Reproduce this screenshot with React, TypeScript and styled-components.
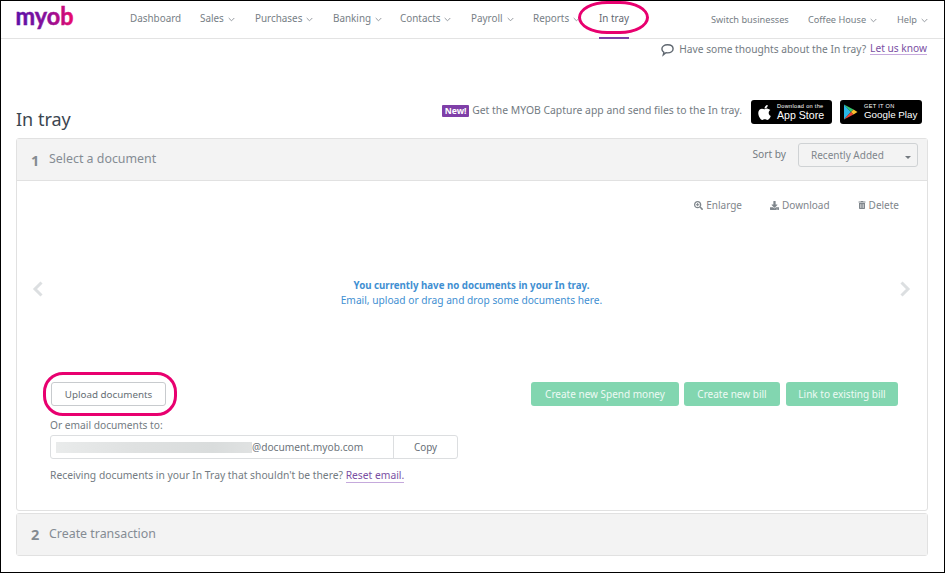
import React from "react";
import styled, { createGlobalStyle } from "styled-components";
import { FaApple, FaTrashAlt, FaSearchPlus, FaDownload } from "react-icons/fa";

const Global = createGlobalStyle`
  html, body { margin: 0; padding: 0; background: #fff; }
  * { box-sizing: border-box; }
  body { font-family: "Noto Sans", "Open Sans", sans-serif; font-size: 10.2px; color: #737b82; }
`;

const Frame = styled.div`
  position: relative;
  width: 945px;
  height: 573px;
  border: 1px solid #000;
  overflow: hidden;
  background: #fff;
`;

const Nav = styled.nav`
  height: 38px;
  border-bottom: 1px solid #e3e3e3;
  display: flex;
  align-items: center;
  padding-left: 14px;
  font-size: 9.9px;
`;

const Logo = styled.svg`
  width: 60px;
  height: 36px;
  flex: none;
`;

const NavMain = styled.div`
  display: flex;
  align-items: center;
  margin-left: 55px;
  height: 37px;
`;

const NavItem = styled.span<{ $w: number; $active?: boolean }>`
  position: relative;
  display: flex;
  align-items: center;
  gap: 4px;
  width: ${(p) => p.$w}px;
  height: 100%;
  padding-bottom: 3px;
  white-space: nowrap;
  color: ${(p) => (p.$active ? "#5f6770" : "#767e85")};
  &::after {
    content: "";
    display: ${(p) => (p.$active ? "block" : "none")};
    position: absolute;
    left: 0;
    width: 30px;
    bottom: -1px;
    height: 2px;
    background: #7d3fa8;
  }
`;

const NavRight = styled.div`
  margin-left: auto;
  display: flex;
  align-items: center;
  height: 37px;
  padding-top: 2px;
  font-size: 9.2px;
  padding-right: 16px;
`;

const Chevron = () => (
  <svg width="7" height="5" viewBox="0 0 7 5" fill="none" stroke="#8a9096" strokeWidth="0.9" style={{ flex: "none", marginTop: 2 }}>
    <path d="M0.7 1 L3.5 3.8 L6.3 1" />
  </svg>
);

const Feedback = styled.div`
  height: 19px;
  display: flex;
  align-items: center;
  justify-content: flex-end;
  padding-right: 17px;
`;

const FeedbackIcon = styled.svg`
  margin-right: 5px;
  margin-top: 2px;
`;

const Link = styled.a`
  color: #7a4fa3;
  border-bottom: 1px solid #c5a9dc;
  line-height: 12px;
`;

const FeedbackLink = styled(Link)`
  margin-left: 4px;
`;

const TitleRow = styled.div`
  height: 80px;
  display: flex;
  align-items: flex-end;
  justify-content: space-between;
  padding: 0 22px 6px 15px;
`;

const Title = styled.h1`
  margin: 0;
  font-weight: 400;
  font-size: 18px;
  line-height: 26px;
  color: #3c4650;
`;

const Promo = styled.div`
  display: flex;
  align-items: center;
  margin-bottom: 8px;
  font-size: 10.4px;
`;

const PromoText = styled.span`
  margin-top: -4px;
`;

const NewBadge = styled.span`
  background: #7f3fa8;
  color: #fff;
  font-weight: 700;
  font-size: 8.6px;
  line-height: 12px;
  height: 12px;
  width: 27px;
  text-align: center;
  border-radius: 1px;
  margin-right: 3px;
  margin-top: -2px;
`;

const StoreBadge = styled.div<{ $w: number; $ml: number; $gap: number }>`
  width: ${(p) => p.$w}px;
  height: 24px;
  margin-left: ${(p) => p.$ml}px;
  background: #000;
  border-radius: 3px;
  color: #fff;
  display: flex;
  align-items: center;
  padding-left: ${(p) => (p.$gap > 5 ? 3 : 5)}px;
  gap: ${(p) => p.$gap}px;
`;

const StoreText = styled.div`
  display: flex;
  flex-direction: column;
  font-family: "Liberation Sans", sans-serif;
`;

const StoreSmall = styled.span`
  font-size: 5.6px;
  line-height: 6px;
  letter-spacing: 0.3px;
`;

const StoreBig = styled.span<{ $size: number }>`
  font-size: ${(p) => p.$size}px;
  line-height: 12px;
  white-space: nowrap;
`;

const Panel = styled.section`
  margin: 0 16px 0 15px;
  border: 1px solid #e1e1e1;
  border-radius: 3px;
`;

const StepHead = styled.header<{ $h: number; $border?: boolean }>`
  height: ${(p) => p.$h}px;
  background: #f3f3f3;
  display: flex;
  align-items: center;
  padding: 0 0 ${(p) => (p.$border ? 2 : 3)}px 14px;
  border-bottom: ${(p) => (p.$border ? "1px solid #e1e1e1" : "none")};
`;

const StepNum = styled.span`
  font-weight: 700;
  font-size: 14.5px;
  color: #848b91;
  width: 18px;
  margin-top: 2px;
`;

const StepTitle = styled.span`
  font-size: 12.4px;
  color: #858c93;
`;

const SortBy = styled.div`
  margin-left: auto;
  display: flex;
  align-items: center;
  padding-right: 9px;
  gap: 12px;
  margin-top: -7px;
`;

const SortLabel = styled.span`
  margin-top: -2px;
`;

const Select = styled.div`
  width: 120px;
  height: 24px;
  border: 1px solid #cfd2d4;
  border-radius: 3px;
  display: flex;
  align-items: center;
  padding-left: 12px;
  position: relative;
  color: #7f868c;
  font-size: 10px;
  &::after {
    content: "";
    position: absolute;
    right: 6px;
    top: 12px;
    border: 3px solid transparent;
    border-top: 3px solid #73797f;
  }
`;

const StepBody = styled.div`
  height: 329px;
  display: flex;
  flex-direction: column;
  padding: 0 29px 0 33px;
`;

const Tools = styled.div`
  height: 48px;
  display: flex;
  justify-content: flex-end;
  align-items: center;
  gap: 28px;
  font-size: 10px;
  margin-right: -1px;
`;

const Tool = styled.span`
  display: inline-flex;
  align-items: center;
  gap: 3px;
  color: #7f868c;
`;

const Viewer = styled.div`
  height: 153px;
  position: relative;
  display: flex;
  flex-direction: column;
  align-items: center;
  justify-content: center;
  color: #3f8fd2;
  line-height: 15px;
  padding: 0 5px 25px 0;
`;

const Arrow = styled.svg<{ $right?: boolean }>`
  position: absolute;
  top: 52px;
  ${(p) => (p.$right ? "right: -13px;" : "left: -18px;")}
`;

const Strong = styled.strong`
  font-weight: 700;
  font-size: 9.7px;
`;

const Actions = styled.div`
  display: flex;
  align-items: center;
  height: 24px;
`;

const GhostButton = styled.button`
  width: 115px;
  height: 24px;
  margin-left: 1px;
  font: inherit;
  font-size: 9.8px;
  color: #666e75;
  background: #fff;
  border: 1px solid #c8cbce;
  border-radius: 3px;
  padding: 0;
`;

const Greens = styled.div`
  margin-left: auto;
  display: flex;
`;

const GreenButton = styled.button<{ $w: number; $ml: number }>`
  width: ${(p) => p.$w}px;
  margin-left: ${(p) => p.$ml}px;
  height: 24px;
  font: inherit;
  font-size: 10px;
  color: #eefaf4;
  background: #82d6b0;
  border: none;
  border-radius: 3px;
  padding: 0;
`;

const EmailLabel = styled.div`
  margin-top: 12px;
  line-height: 15px;
  color: #737b82;
`;

const EmailRow = styled.div`
  margin-top: 2px;
  width: 408px;
  height: 24px;
  display: flex;
  border: 1px solid #dcdee0;
  border-radius: 3px;
`;

const EmailValue = styled.div`
  width: 343px;
  border-right: 1px solid #dcdee0;
  display: flex;
  align-items: center;
  padding-left: 5px;
  color: #6d747b;
`;

const Blurred = styled.span`
  width: 196px;
  height: 11px;
  background: linear-gradient(90deg, #e9ebeb, #dfe1e1 40%, #d9dcdc 80%, #e0e2e2);
  filter: blur(0.6px);
`;

const CopyCell = styled.div`
  flex: 1;
  display: flex;
  align-items: center;
  justify-content: center;
  color: #666e75;
  font-size: 9.9px;
`;

const Reset = styled.div`
  margin-top: 9px;
  line-height: 15px;
  font-size: 10.3px;
`;

const SecondPanel = styled(Panel)`
  margin-top: 2px;
`;

const Ring = styled.div<{ $l: number; $t: number; $w: number; $h: number }>`
  position: absolute;
  left: ${(p) => p.$l}px;
  top: ${(p) => p.$t}px;
  width: ${(p) => p.$w}px;
  height: ${(p) => p.$h}px;
  border: 3px solid #e8006f;
  border-radius: 30px / 17px;
  pointer-events: none;
`;

const RingBox = styled(Ring)`
  border-radius: 20px;
`;

const nav: [string, number, boolean][] = [
  ["Dashboard", 70, false],
  ["Sales", 55, true],
  ["Purchases", 78, true],
  ["Banking", 67, true],
  ["Contacts", 71, true],
  ["Payroll", 62, true],
  ["Reports", 66, true],
];

export default function App() {
  return (
    <Frame>
      <Global />
      <Nav>
        <Logo viewBox="0 0 60 36">
          <defs>
            <linearGradient id="lg" x1="0" x2="1" y1="0" y2="0">
              <stop offset="0" stopColor="#5a0fa8" />
              <stop offset="0.55" stopColor="#8a0f9a" />
              <stop offset="1" stopColor="#ea0a6c" />
            </linearGradient>
          </defs>
          <text x="0.5" y="23" fill="url(#lg)" stroke="url(#lg)" strokeWidth="0.5" fontFamily="Lato, sans-serif" fontWeight="700" fontSize="24" textLength="58" lengthAdjust="spacingAndGlyphs">myob</text>
        </Logo>
        <NavMain>
          {nav.map(([t, w, c]) => (
            <NavItem key={t} $w={w}>
              {t}
              {c && <Chevron />}
            </NavItem>
          ))}
          <NavItem $w={40} $active>In tray</NavItem>
        </NavMain>
        <NavRight>
          <NavItem $w={97}>Switch businesses</NavItem>
          <NavItem $w={89}>Coffee House <Chevron /></NavItem>
          <NavItem $w={31}>Help <Chevron /></NavItem>
        </NavRight>
      </Nav>
      <Feedback>
        <FeedbackIcon width="13" height="14" viewBox="0 0 13 14" fill="none" stroke="#5f6770" strokeWidth="1.4">
          <path d="M2.3 11.8 L2.9 9.4 C1.6 8.5 0.9 7.3 0.9 6 C0.9 3.6 3.2 1.7 6.5 1.7 C9.8 1.7 12.1 3.4 12.1 5.8 C12.1 8.2 9.8 9.9 6.6 9.9 C5.9 9.9 5.4 9.9 4.9 9.7 Z" />
        </FeedbackIcon>
        <span>Have some thoughts about the In tray?</span>
        <FeedbackLink>Let us know</FeedbackLink>
      </Feedback>
      <TitleRow>
        <Title>In tray</Title>
        <Promo>
          <NewBadge>New!</NewBadge>
          <PromoText>Get the MYOB Capture app and send files to the In tray.</PromoText>
          <StoreBadge $w={81} $ml={9} $gap={4}>
            <FaApple size={17} />
            <StoreText>
              <StoreSmall>Download on the</StoreSmall>
              <StoreBig $size={10.6}>App Store</StoreBig>
            </StoreText>
          </StoreBadge>
          <StoreBadge $w={82} $ml={8} $gap={6}>
            <svg width="15" height="16" viewBox="0 0 15 16">
              <path d="M1 0.5 L8 8 L1 15.5 Z" fill="#29b6e8" />
              <path d="M1 0.5 L10.5 5.6 L8 8 Z" fill="#35c46f" />
              <path d="M1 15.5 L10.5 10.4 L8 8 Z" fill="#ea4335" />
              <path d="M10.5 5.6 L14.5 8 L10.5 10.4 L8 8 Z" fill="#fbc02d" />
            </svg>
            <StoreText>
              <StoreSmall>GET IT ON</StoreSmall>
              <StoreBig $size={9.8}>Google Play</StoreBig>
            </StoreText>
          </StoreBadge>
        </Promo>
      </TitleRow>
      <Panel>
        <StepHead $h={42} $border>
          <StepNum>1</StepNum>
          <StepTitle>Select a document</StepTitle>
          <SortBy>
            <SortLabel>Sort by</SortLabel>
            <Select>Recently Added</Select>
          </SortBy>
        </StepHead>
        <StepBody>
          <Tools>
            <Tool><FaSearchPlus size={9} /> Enlarge</Tool>
            <Tool><FaDownload size={9} /> Download</Tool>
            <Tool><FaTrashAlt size={8} /> Delete</Tool>
          </Tools>
          <Viewer>
            <Arrow width="12" height="16" viewBox="0 0 12 16" fill="none" stroke="#dcdfe1" strokeWidth="3">
              <path d="M9.5 1.5 L3 8 L9.5 14.5" />
            </Arrow>
            <Strong>You currently have no documents in your In tray.</Strong>
            <span>Email, upload or drag and drop some documents here.</span>
            <Arrow $right width="12" height="16" viewBox="0 0 12 16" fill="none" stroke="#dcdfe1" strokeWidth="3">
              <path d="M2.5 1.5 L9 8 L2.5 14.5" />
            </Arrow>
          </Viewer>
          <Actions>
            <GhostButton>Upload documents</GhostButton>
            <Greens>
              <GreenButton $w={148} $ml={0}>Create new Spend money</GreenButton>
              <GreenButton $w={96} $ml={5}>Create new bill</GreenButton>
              <GreenButton $w={112} $ml={6}>Link to existing bill</GreenButton>
            </Greens>
          </Actions>
          <EmailLabel>Or email documents to:</EmailLabel>
          <EmailRow>
            <EmailValue><Blurred />@document.myob.com</EmailValue>
            <CopyCell>Copy</CopyCell>
          </EmailRow>
          <Reset>
            Receiving documents in your In Tray that shouldn't be there? <Link>Reset email.</Link>
          </Reset>
        </StepBody>
      </Panel>
      <SecondPanel>
        <StepHead $h={41}>
          <StepNum>2</StepNum>
          <StepTitle>Create transaction</StepTitle>
        </StepHead>
      </SecondPanel>
      <Ring $l={577} $t={0} $w={71} $h={33} />
      <RingBox $l={42} $t={371} $w={134} $h={44} />
    </Frame>
  );
}
